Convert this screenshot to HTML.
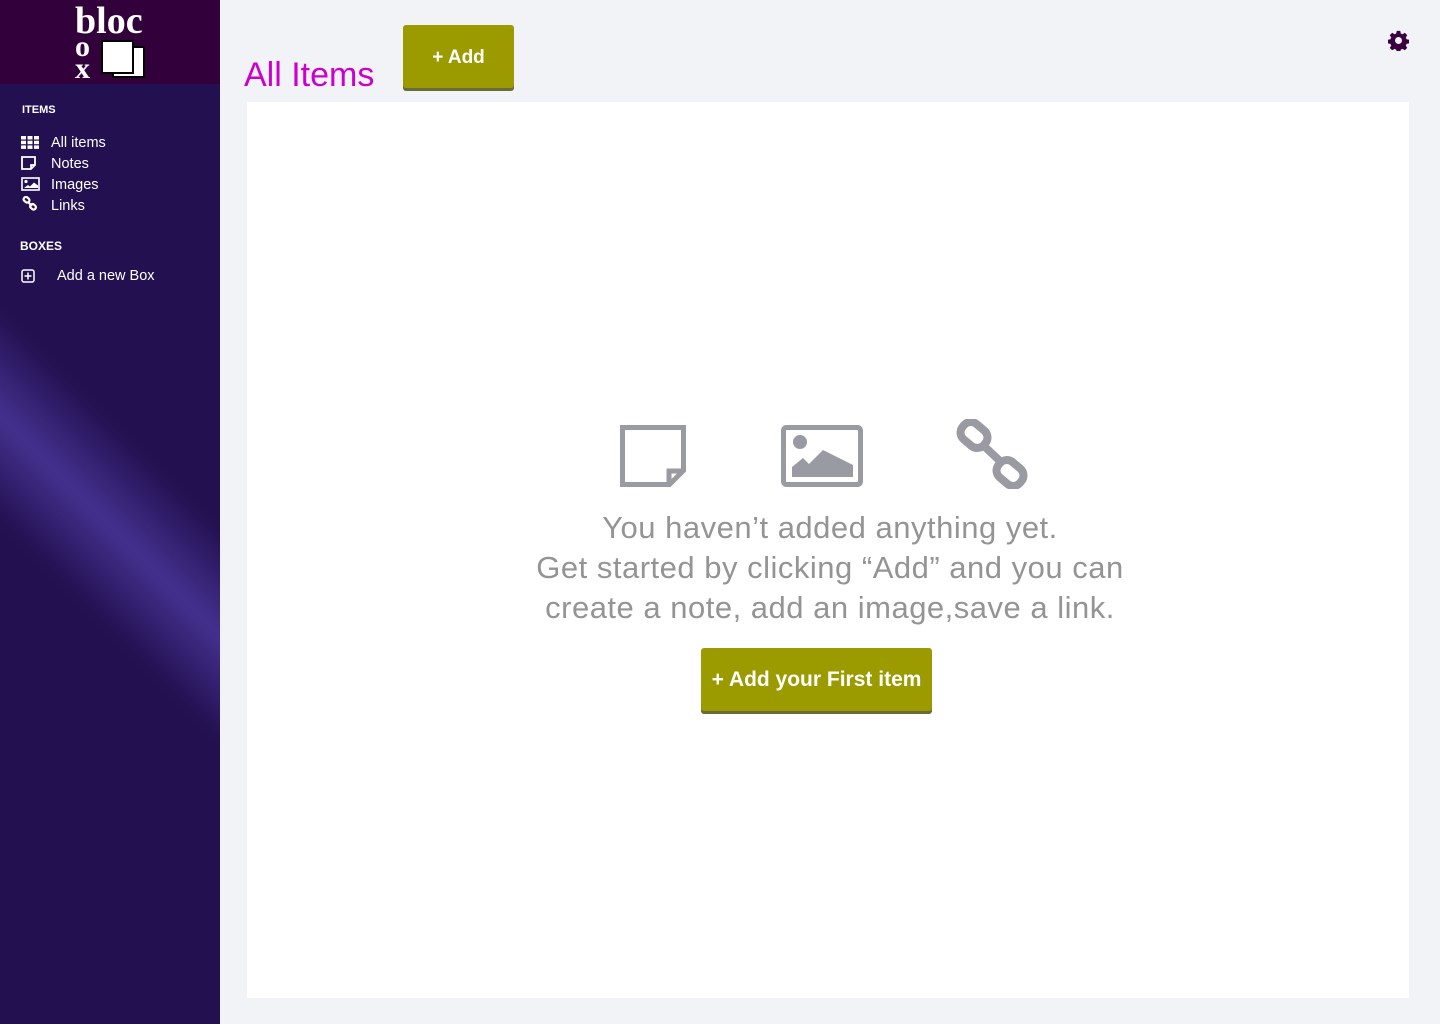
<!DOCTYPE html>
<html><head><meta charset="utf-8"><style>
*{margin:0;padding:0;box-sizing:border-box}
body{width:1440px;height:1024px;background:#f2f3f7;font-family:"Liberation Sans",sans-serif;position:relative;overflow:hidden}
.side{position:absolute;left:0;top:0;width:220px;height:1024px;background:#231050;overflow:hidden}
.logo{position:absolute;left:0;top:0;width:220px;height:84px;background:#32003a}
.streak{position:absolute;left:-230px;top:460px;width:700px;height:150px;transform:rotate(45deg);background:linear-gradient(to bottom,rgba(68,49,143,0) 0%,rgba(68,49,143,1) 50%,rgba(68,49,143,0) 100%);filter:blur(6px)}
.side .t{position:absolute;color:#fff;font-size:14.5px}
.hd{position:absolute;color:#fff;font-weight:bold;font-size:11px}
.main{position:absolute;left:247px;top:102px;width:1162px;height:896px;background:#fff}
.btn{position:absolute;background:#9b9b00;color:#fff;font-weight:bold;border-radius:3px;box-shadow:0 3px 0 #6b6b3a;text-align:center}
.msg{position:absolute;left:430px;width:800px;text-align:center;color:#949494;font-size:31px;line-height:40px;letter-spacing:0.5px;top:508px}
</style></head><body>
<div class="side">
 <div class="streak"></div>
 <div class="logo">
  <div style="position:absolute;left:75px;top:3px;color:#fff;font-family:'Liberation Serif',serif;font-weight:bold;font-size:38px;line-height:36px">bloc</div>
  <div style="position:absolute;left:75px;top:36px;color:#fff;font-family:'Liberation Serif',serif;font-weight:bold;font-size:30px;line-height:22px">o<br>x</div>
  <div style="position:absolute;left:112px;top:46px;width:33px;height:32px;background:#fff;border:2px solid #000"></div>
  <div style="position:absolute;left:101px;top:40px;width:33px;height:34px;background:#fff;border:2px solid #000"></div>
 </div>
 <div class="hd" style="left:22px;top:104px">ITEMS</div>
 <svg style="position:absolute;left:21px;top:136px" width="18" height="13" viewBox="0 0 18 13" fill="#fff"><rect x="0" y="0" width="5" height="3.5"/><rect x="6.5" y="0" width="5" height="3.5"/><rect x="13" y="0" width="5" height="3.5"/><rect x="0" y="4.7" width="5" height="3.5"/><rect x="6.5" y="4.7" width="5" height="3.5"/><rect x="13" y="4.7" width="5" height="3.5"/><rect x="0" y="9.4" width="5" height="3.5"/><rect x="6.5" y="9.4" width="5" height="3.5"/><rect x="13" y="9.4" width="5" height="3.5"/></svg>
 <div class="t" style="left:51px;top:135px">All items</div>
 <svg style="position:absolute;left:21px;top:156px" width="15" height="14" viewBox="0 0 15 14" fill="none" stroke="#fff" stroke-width="1.8"><path d="M1 1h13v8l-4 4H1z M10 13v-4h4"/></svg>
 <div class="t" style="left:51px;top:156px">Notes</div>
 <svg style="position:absolute;left:21px;top:177px" width="19" height="14" viewBox="0 0 19 14"><rect x="1" y="1" width="17" height="12" fill="none" stroke="#fff" stroke-width="1.6"/><circle cx="5" cy="4.5" r="1.6" fill="#fff"/><path d="M3 11l4-3 2 1.5 4-4 4 3v2.5z" fill="#fff"/></svg>
 <div class="t" style="left:51px;top:177px">Images</div>
 <svg style="position:absolute;left:22px;top:196px" width="16" height="16" viewBox="0 0 16 16" fill="none" stroke="#fff" stroke-width="2.2"><rect x="1.5" y="1.5" width="6" height="4.5" rx="2" transform="rotate(40 4.5 3.8)"/><rect x="8" y="8.5" width="6" height="4.5" rx="2" transform="rotate(40 11 10.8)"/><path d="M6 6l4 4"/></svg>
 <div class="t" style="left:51px;top:198px">Links</div>
 <div class="hd" style="left:20px;top:239px;font-size:12px">BOXES</div>
 <svg style="position:absolute;left:21px;top:269px" width="14" height="14" viewBox="0 0 14 14" fill="none" stroke="#fff" stroke-width="1.5"><rect x="1" y="1" width="12" height="12" rx="2"/><path d="M7 3.5v7M3.5 7h7"/></svg>
 <div class="t" style="left:57px;top:268px">Add a new Box</div>
</div>
<div style="position:absolute;left:244px;top:56px;color:#cc00cc;font-size:34px">All Items</div>
<div class="btn" style="left:403px;top:25px;width:111px;height:63px;line-height:66px;font-size:19px">+ Add</div>
<svg style="position:absolute;left:1388px;top:30px" width="21" height="21" viewBox="0 0 24 24"><path fill="#3a0040" fill-rule="evenodd" d="M10 1h4l.6 3 2 .9 2.6-1.7 2.8 2.8-1.7 2.6.9 2 3 .6v4l-3 .6-.9 2 1.7 2.6-2.8 2.8-2.6-1.7-2 .9-.6 3h-4l-.6-3-2-.9-2.6 1.7-2.8-2.8 1.7-2.6-.9-2-3-.6v-4l3-.6.9-2-1.7-2.6 2.8-2.8 2.6 1.7 2-.9zM12 8a4 4 0 100 8 4 4 0 000-8z"/></svg>
<div class="main"></div>
<svg style="position:absolute;left:619px;top:424px" width="68" height="64" viewBox="0 0 68 64" fill="none" stroke="#9a9aa2" stroke-width="5"><path d="M3.5 3.5h61v43l-14 14h-47z"/><path d="M50 61V47h14"/></svg>
<svg style="position:absolute;left:780px;top:424px" width="84" height="64" viewBox="0 0 84 64"><rect x="3.5" y="3.5" width="77" height="57" rx="3" fill="none" stroke="#9a9aa2" stroke-width="5"/><circle cx="20" cy="18" r="7" fill="#9a9aa2"/><path d="M12 53V43l11-9 6 6 14-14 30 15v12z" fill="#9a9aa2"/></svg>
<svg style="position:absolute;left:956px;top:419px" width="74" height="70" viewBox="0 0 74 70" fill="none" stroke="#9a9aa2" stroke-width="8"><rect x="4" y="6" width="28" height="20" rx="9" transform="rotate(40 18 16)"/><rect x="40" y="44" width="28" height="20" rx="9" transform="rotate(40 54 54)"/><path d="M29 28l16 15"/></svg>
<div class="msg">You haven’t added anything yet.<br>Get started by clicking “Add” and you can<br>create a note, add an image,save a link.</div>
<div class="btn" style="left:701px;top:648px;width:231px;height:63px;line-height:63px;font-size:21px">+ Add your First item</div>
</body></html>
